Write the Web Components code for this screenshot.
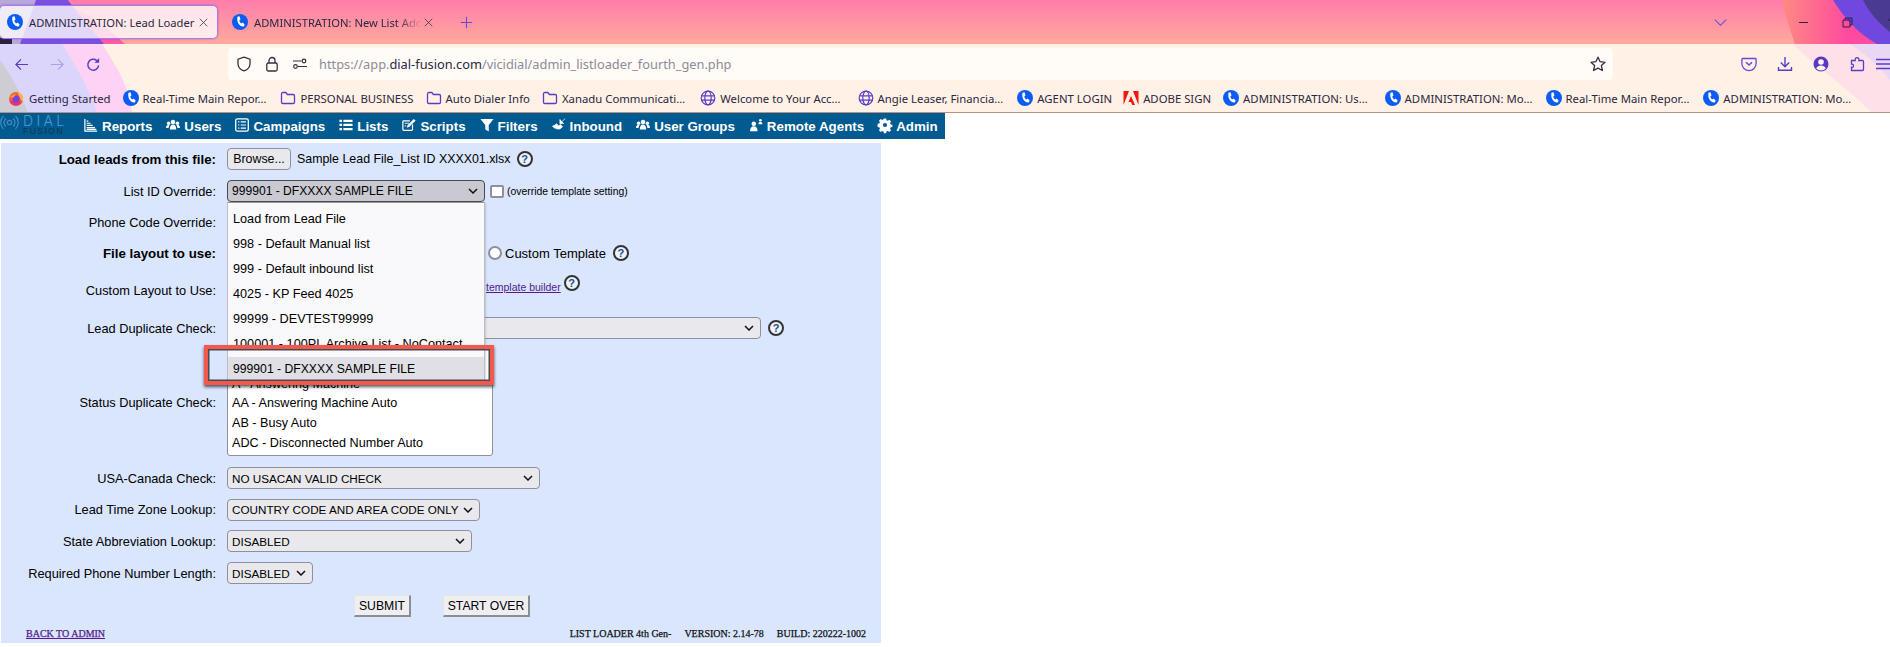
<!DOCTYPE html>
<html>
<head>
<meta charset="utf-8">
<title>ADMINISTRATION: Lead Loader</title>
<style>
  html, body { margin: 0; padding: 0; background: #fff; }
  body { width: 1890px; height: 647px; overflow: hidden; font-family: "Liberation Sans", Arial, sans-serif; }
</style>
</head>
<body>
<browser-chrome></browser-chrome>
<admin-nav>
  <nav-item icon="reports">Reports</nav-item>
  <nav-item icon="users">Users</nav-item>
  <nav-item icon="campaigns">Campaigns</nav-item>
  <nav-item icon="lists">Lists</nav-item>
  <nav-item icon="scripts">Scripts</nav-item>
  <nav-item icon="filters">Filters</nav-item>
  <nav-item icon="inbound">Inbound</nav-item>
  <nav-item icon="users">User Groups</nav-item>
  <nav-item icon="remote">Remote Agents</nav-item>
  <nav-item icon="admin">Admin</nav-item>
</admin-nav>
<loader-panel></loader-panel>

<script>
const ICONS = {
  phone: '<circle cx="8" cy="8" r="8" fill="#0a5cf2"/><path d="M5.4 2.8l2.1-.5 1 3.1-1.2 1c.3 1.3 1 2.4 2.1 3.1l1.3-.9 2 2.1-1 1.7C8 13 4.4 8.800 5.400 2.800z" fill="#fff"/>',
  firefox: '<circle cx="8" cy="9" r="7" fill="#f2603a"/><path d="M9 1c3 1.500 6 4 6 8 0 1-.3 2-.8 3L11 6z" fill="#ffb52e"/><path d="M1.500 11c1 3 3.500 4.500 6.500 4.500 3 0 5-1.500 6-4z" fill="#e8336d"/><circle cx="8" cy="9" r="3.700" fill="#7b3fe4"/><path d="M2 7c2-2 4-3 6-2.500L5 8z" fill="#ff9a2e"/>',
  folder: '<path d="M1.500 3.800a1.300 1.300 0 0 1 1.300-1.300h3l1.600 2h5.800a1.300 1.300 0 0 1 1.300 1.300v6.400a1.300 1.300 0 0 1-1.300 1.300H2.800a1.300 1.300 0 0 1-1.300-1.300z" fill="none" stroke="#5a3cc8" stroke-width="1.300"/>',
  globe: '<g fill="none" stroke="#5a3cc8" stroke-width="1.200"><circle cx="8" cy="8" r="6.800"/><ellipse cx="8" cy="8" rx="3.200" ry="6.800"/><path d="M1.500 5.800h13M1.500 10.200h13"/></g>',
  adobe: '<path d="M.5 1h5.500L.5 15zM15.500 1H10l5.500 14zM8 6l4 9H9.300L8 12H5.500z" fill="#f5150a"/>',
  back: '<path d="M15 8H2M7.500 2.500L2 8l5.500 5.500" fill="none" stroke="currentColor" stroke-width="1.300"/>',
  forward: '<path d="M1 8h13M8.500 2.500L14 8l-5.500 5.500" fill="none" stroke="currentColor" stroke-width="1.300"/>',
  reload: '<path d="M13.500 9a5.800 5.800 0 1 1-2-5.200" fill="none" stroke="currentColor" stroke-width="1.600"/><path d="M14 1v5h-5z" fill="currentColor"/>',
  shield: '<path d="M8 1.200l6 2v4.500c0 3.600-2.600 6-6 7.100-3.400-1.100-6-3.500-6-7.100V3.200z" fill="none" stroke="#34303f" stroke-width="1.300"/>',
  lock: '<g fill="none" stroke="#34303f" stroke-width="1.300"><rect x="2.800" y="7" width="10.400" height="8" rx="1.500"/><path d="M5 7V4.500a3 3 0 0 1 6 0V7"/></g>',
  perms: '<g fill="none" stroke="#34303f" stroke-width="1.200"><circle cx="3.500" cy="10.500" r="1.800"/><circle cx="12" cy="5" r="1.800"/><path d="M1 5h8.500M6 10.500h9"/></g>',
  star: '<path d="M8 1.200l2.100 4.500 4.900.6-3.600 3.300 1 4.900L8 12.100l-4.400 2.400 1-4.900L1 6.300l4.900-.6z" fill="none" stroke="#34303f" stroke-width="1.300" stroke-linejoin="round"/>',
  pocket: '<path d="M1.700 2.500h12.600a.8.800 0 0 1 .8.800v4.200a7.100 7.100 0 0 1-14.200 0V3.300a.8.800 0 0 1 .8-.8z" fill="none" stroke="#6a48dc" stroke-width="1.300"/><path d="M5 6.200l3 2.800 3-2.800" fill="none" stroke="#6a48dc" stroke-width="1.500"/>',
  download: '<path d="M8 1v9.500M3.800 6.500L8 10.700l4.200-4.200M1.500 11v3.300h13V11" fill="none" stroke="#5a3cc8" stroke-width="1.400"/>',
  profile: '<circle cx="8" cy="8" r="7.500" fill="#5a38c0"/><circle cx="8" cy="6" r="2.800" fill="#fff2ee"/><path d="M3.200 12.500c1-2.300 2.800-3 4.800-3s3.800.7 4.800 3a6.500 6.500 0 0 1-9.600 0z" fill="#fff2ee"/>',
  puzzle: '<path d="M1.500 5.500h3.700c-.9-3.800 4.600-3.800 3.700 0h3.600a1 1 0 0 1 1 1v8a1 1 0 0 1-1 1h-11v-3.300c2.700.7 2.700-3.700 0-3z" fill="none" stroke="#5a3cc8" stroke-width="1.300" transform="translate(1 -1) "/>',
  menu: '<path d="M1 3.500h14M1 8h14M1 12.500h14" stroke="#5a3cc8" stroke-width="1.400" fill="none"/>',
  chevron: '<path d="M1 4.500l7 7 7-7" fill="none" stroke="#6a48dc" stroke-width="1.300"/>',
  plus: '<path d="M8 1v14M1 8h14" stroke="#6a48dc" stroke-width="1.300" fill="none"/>',
  close: '<path d="M2.500 2.500l11 11M13.500 2.500l-11 11" stroke="#34303f" stroke-width="1.100" fill="none"/>',
  min: '<path d="M2.500 8h11" stroke="#1c1830" stroke-width="1.100" fill="none"/>',
  restore: '<path d="M2.500 5h8.500v8.500H2.500zM5 5V2.500h8.500V11H11" stroke="#1c1830" stroke-width="1.100" fill="none"/>',
  reports: '<path d="M1 1v14h14M3 3.500h2M3 6h4.500M3 8.500h7M3 11h9.500M3 13h11" fill="none" stroke="#fff" stroke-width="1.400"/>',
  users: '<g fill="#fff"><circle cx="8" cy="4.500" r="2.600"/><circle cx="3" cy="6" r="2"/><circle cx="13" cy="6" r="2"/><path d="M4.300 13c0-3.600 1.500-5.500 3.700-5.500s3.700 1.900 3.700 5.500z"/><path d="M0 11.500c0-2.300 1-3.800 2.700-3.800.6 0 1 .1 1.400.4-.7 1-1.100 2.100-1.200 3.400zM16 11.500c0-2.300-1-3.800-2.700-3.800-.6 0-1 .1-1.400.4.700 1 1.100 2.100 1.200 3.400z"/></g>',
  campaigns: '<g fill="none" stroke="#fff"><rect x=".800" y="1" width="14.400" height="14" rx="2" stroke-width="1.500"/><path d="M3.500 4.500h1.500M6.500 4.500h6M3.500 8h1.500M6.500 8h6M3.500 11.500h1.500M6.500 11.500h6" stroke-width="1.400"/></g>',
  lists: '<path d="M.5 2h3v2.500h-3zM.5 6.700h3v2.500h-3zM.5 11.400h3v2.500h-3zM5 2h10.500v2.500H5zM5 6.700h10.500v2.500H5zM5 11.400h10.500v2.500H5z" fill="#fff"/>',
  scripts: '<path d="M12 7.500v5.700a1 1 0 0 1-1 1H2a1 1 0 0 1-1-1V4.200a1 1 0 0 1 1-1h7" fill="none" stroke="#fff" stroke-width="1.400"/><path d="M13.500 1l2 2-7 7-3 1 1-3z" fill="#fff"/><path d="M3 6h5M3 9h2" stroke="#fff" fill="none"/>',
  filters: '<path d="M.5 1h15L10 8v7.500L6 13V8z" fill="#fff"/>',
  inbound: '<path d="M3.500 8l1.800-1.500c.8 1 1.500 1.700 2.500 2.400l1.600-1.600 2.600 2.300c-1.500 3-4.600 3.700-7.500 2.500-1.500-.6-3-1.500-4-2.600zM9 1.500v4.800h4.500M9.500 5.800L15 .8" fill="#fff" stroke="#fff" stroke-width=".8"/>',
  remote: '<g fill="#fff"><circle cx="5.500" cy="6.500" r="2.600"/><path d="M1.200 15c0-4 1.800-5.700 4.300-5.700S9.800 11 9.800 15z"/><circle cx="13" cy="2.500" r="1.500"/><path d="M10.700 7c0-1.800 1-2.800 2.300-2.800s2.300 1 2.300 2.800z"/></g>',
  admin: '<path fill-rule="evenodd" d="M6.700.5h2.600l.4 2 1.500.7 1.800-1.100 1.900 1.900-1.100 1.800.7 1.500 2 .4v2.600l-2 .4-.7 1.500 1.100 1.800-1.900 1.900-1.800-1.100-1.500.7-.4 2H6.700l-.4-2-1.500-.7-1.800 1.100-1.900-1.900 1.100-1.800-.7-1.500-2-.4V6.700l2-.4.7-1.500L1.100 3l1.900-1.900 1.800 1.100 1.500-.7zM8 5.600a2.400 2.400 0 1 0 0 4.800 2.400 2.400 0 0 0 0-4.800z" fill="#fff"/>'
};

class UiIcon extends HTMLElement {
  constructor() {
    super();
    this.attachShadow({ mode: 'open' });
  }
  connectedCallback() {
    const size = this.getAttribute('size') || 16;
    this.shadowRoot.innerHTML = `
      <style>:host { display: inline-flex; flex: none; width: ${size}px; height: ${size}px; } svg { display: block; width: 100%; height: 100%; overflow: visible; }</style>
      <svg viewBox="0 0 16 16">${ICONS[this.getAttribute('name')] || ''}</svg>`;
  }
}
customElements.define('ui-icon', UiIcon);

class BrowserTab extends HTMLElement {
  constructor() {
    super();
    this.attachShadow({ mode: 'open' });
  }
  connectedCallback() {
    this.shadowRoot.innerHTML = `
      <style>
        :host { display: flex; align-items: center; height: 34px; box-sizing: border-box; flex: none; width: 219px; padding-left: 7px; border: 1px solid transparent; border-radius: 5px; }
        :host([active]) { background: rgba(255,255,255,.78); border-color: #a678f2; box-shadow: 0 0 2px rgba(90,50,200,.5); }
        .t { margin-left: 6px; width: 168px; overflow: hidden; white-space: nowrap; font-size: 11.2px; color: #2b2740; }
        :host(:not([active])) .t { -webkit-mask-image: linear-gradient(90deg, #000 85%, transparent 100%); mask-image: linear-gradient(90deg, #000 85%, transparent 100%); }
        .x { margin-left: 1px; }
      </style>
      <ui-icon name="phone"></ui-icon><div class="t"><slot></slot></div><ui-icon class="x" name="close" size="11"></ui-icon>`;
  }
}
customElements.define('browser-tab', BrowserTab);

class BookmarkItem extends HTMLElement {
  constructor() {
    super();
    this.attachShadow({ mode: 'open' });
  }
  connectedCallback() {
    this.shadowRoot.innerHTML = `
      <style>
        :host { display: inline-flex; align-items: center; gap: var(--gap, 4px); flex: none; font-size: 11.35px; color: #2b2740; white-space: nowrap; }
      </style>
      <ui-icon name="${this.getAttribute('icon')}"></ui-icon><span><slot></slot></span>`;
  }
}
customElements.define('bookmark-item', BookmarkItem);

class BrowserChrome extends HTMLElement {
  constructor() {
    super();
    this.attachShadow({ mode: 'open' });
  }
  connectedCallback() {
    const marks = [
      ['firefox', 'Getting Started', 0], ['phone', 'Real-Time Main Repor…', 12], ['folder', 'PERSONAL BUSINESS', 14],
      ['folder', 'Auto Dialer Info', 12], ['folder', 'Xanadu Communicati…', 12], ['globe', 'Welcome to Your Acc…', 15],
      ['globe', 'Angie Leaser, Financia…', 17], ['phone', 'AGENT LOGIN', 14], ['adobe', 'ADOBE SIGN', 11],
      ['phone', 'ADMINISTRATION: Us…', 12], ['phone', 'ADMINISTRATION: Mo…', 17], ['phone', 'Real-Time Main Repor…', 13], ['phone', 'ADMINISTRATION: Mo…', 14]
    ];
    this.shadowRoot.innerHTML = `
      <style>
        :host { display: block; position: relative; height: 113px; box-sizing: border-box; border-bottom: 1px solid #b8927c; overflow: hidden; font-family: "Noto Sans", "Open Sans", sans-serif; }
        .art { position: absolute; left: 0; top: 0; width: 1890px; height: 113px; }
        .tabs, .tools, .marks { position: relative; display: flex; align-items: center; }
        .tabs { height: 44px; box-sizing: border-box; }
        .tabs browser-tab:first-child { margin-left: -1px; }
        .tabs browser-tab + browser-tab { margin-left: 6px; }
        .plus { margin-left: 17px; }
        .winbtns { margin-left: auto; display: flex; align-items: center; }
        .tools { height: 40px; }
        .btn { width: 36px; height: 36px; flex: none; display: flex; align-items: center; justify-content: center; color: #5a3cc8; }
        .btn.off { color: #b39cf0; }
        .url { margin-left: 117px; width: 1385px; height: 32px; flex: none; box-sizing: border-box; background: #fffbf7; border-radius: 4px; display: flex; align-items: center; padding-left: 8px; font-size: 12.8px; color: #8e8a97; white-space: nowrap; }
        .url b { font-weight: 400; color: #2b2740; }
        .url ui-icon { margin-right: 12px; }
        .url span { margin-left: 1px; }
        .url .star { margin: 0 7px 0 auto; }
        .right { margin-left: 118px; display: flex; }
        .marks { height: 28px; padding-left: 8px; }
      </style>
      <svg class="art" viewBox="0 0 1890 113" preserveAspectRatio="none">
        <defs>
          <linearGradient id="sky" x1="0" y1="0" x2="0" y2="1"><stop offset="0" stop-color="#ff7daa"/><stop offset="1" stop-color="#ffaa9c"/></linearGradient>
          <linearGradient id="hot" x1="0" y1="0" x2="1" y2="0"><stop offset="0" stop-color="#ff8a82"/><stop offset=".6" stop-color="#ff4b9f"/></linearGradient>
        </defs>
        <rect width="1890" height="44" fill="url(#sky)"/>
        <path d="M60 0C90 15 110 30 125 44H0V0z" fill="#ff5aa6"/>
        <path d="M36 0H68C78 15 92 30 104 44H0V0z" fill="#7a50e0"/>
        <path d="M0 0H36L20 44H0z" fill="#b9a7d8"/>
        <path d="M0 38H12V44H0z" fill="#2c2040"/>
        <path d="M1782 0C1785 15 1790 30 1795 44H1890V0z" fill="url(#hot)"/>
        <path d="M1833 0C1842 15 1858 34 1877 44H1890V0z" fill="#7048e0"/>
        <path d="M1863 0C1870 14 1880 24 1890 32V0z" fill="#4a3a90"/>
        <rect y="44" width="1890" height="69" fill="#fff1e6"/>
        <path d="M0 44H102C112 60 130 85 132 113H0z" fill="#fdd2f4"/>
        <path d="M0 44H62C72 60 88 85 97 113H0z" fill="#dcd5fb"/>
        <path d="M0 60C8 70 22 95 28 113H0z" fill="#cfcdd4"/>
        <path d="M1793 44C1815 66 1850 90 1872 113H1890V44z" fill="#fde0e8"/>
        <path d="M1850 44H1890V80C1880 66 1865 54 1850 44z" fill="#e8d8f4"/>
      </svg>
      <div class="tabs">
        <browser-tab active>ADMINISTRATION: Lead Loader</browser-tab>
        <browser-tab>ADMINISTRATION: New List Add</browser-tab>
        <ui-icon class="plus" name="plus" size="13"></ui-icon>
        <div class="winbtns">
          <ui-icon name="chevron" size="13"></ui-icon>
          <ui-icon name="min" size="13" style="margin-left:70px"></ui-icon>
          <ui-icon name="restore" size="13" style="margin-left:31px"></ui-icon>
          <ui-icon name="min" size="12" style="margin-left:31px;margin-right:-7px;transform:rotate(45deg)"></ui-icon>
        </div>
      </div>
      <div class="tools">
        <div class="btn" style="margin-left:3px"><ui-icon name="back" size="15"></ui-icon></div>
        <div class="btn off"><ui-icon name="forward" size="15"></ui-icon></div>
        <div class="btn"><ui-icon name="reload" size="15"></ui-icon></div>
        <div class="url">
          <ui-icon name="shield"></ui-icon><ui-icon name="lock"></ui-icon><ui-icon name="perms" style="margin-right:10px"></ui-icon>
          <span>https://app.<b>dial-fusion.com</b>/vicidial/admin_listloader_fourth_gen.php</span>
          <ui-icon class="star" name="star"></ui-icon>
        </div>
        <div class="right">
          <div class="btn"><ui-icon name="pocket"></ui-icon></div>
          <div class="btn"><ui-icon name="download"></ui-icon></div>
          <div class="btn"><ui-icon name="profile"></ui-icon></div>
          <div class="btn"><ui-icon name="puzzle"></ui-icon></div>
          <div class="btn" style="margin-left:-10px"><ui-icon name="menu"></ui-icon></div>
        </div>
      </div>
      <div class="marks">
        ${marks.map((m, i) => `<bookmark-item icon="${m[0]}" style="margin-left:${m[2]}px${i ? '' : ';--gap:5px'}">${m[1]}</bookmark-item>`).join('')}
      </div>`;
  }
}
customElements.define('browser-chrome', BrowserChrome);

class AdminNav extends HTMLElement {
  constructor() {
    super();
    this.attachShadow({ mode: 'open' });
  }
  connectedCallback() {
    this.shadowRoot.innerHTML = `
      <style>
        :host { display: flex; align-items: center; gap: 14px; width: 945px; height: 26px; background: #015b91; overflow: hidden; box-sizing: border-box; }
        .logo { width: 70px; height: 26px; flex: none; display: flex; }
        .rings { width: 20px; height: 26px; flex: none; }
        .words { margin: 1px 0 0 3px; display: flex; flex-direction: column; width: 45px; }
        .dial { font: 300 14px/13px "Inter", "Liberation Sans", sans-serif; letter-spacing: 3.4px; color: #4d9ad0; }
        .fusion { font: 400 8.5px/9px "Liberation Sans", sans-serif; letter-spacing: 1.5px; color: #0e3350; }
      </style>
      <div class="logo">
        <svg class="rings" viewBox="0 0 20 26"><g fill="none" stroke="#3f8dc4" stroke-width="1.200"><circle cx="9.500" cy="9.500" r="2.200" fill="#1f4f78"/><path d="M6 5.500a5 5 0 0 0 0 8M13 5.500a5 5 0 0 1 0 8M3.500 3a9 9 0 0 0 0 13M15.500 3a9 9 0 0 1 0 13"/></g></svg>
        <div class="words"><span class="dial">DIAL</span><span class="fusion">FUSION</span></div>
      </div>
      <slot></slot>`;
  }
}
customElements.define('admin-nav', AdminNav);

class NavItem extends HTMLElement {
  constructor() {
    super();
    this.attachShadow({ mode: 'open' });
  }
  connectedCallback() {
    this.shadowRoot.innerHTML = `
      <style>
        :host { display: inline-flex; align-items: center; gap: 4px; flex: none; color: #fff; font-size: 13.33px; font-weight: 700; white-space: nowrap; }
        ui-icon { margin-top: -3px; }
      </style>
      <ui-icon name="${this.getAttribute('icon')}" size="14"></ui-icon><span><slot></slot></span>`;
  }
}
customElements.define('nav-item', NavItem);

class FormRow extends HTMLElement {
  constructor() {
    super();
    this.attachShadow({ mode: 'open' });
  }
  connectedCallback() {
    this.shadowRoot.innerHTML = `
      <style>
        :host { display: flex; align-items: center; height: var(--h, 32px); color: #000; font-size: 12px; }
        .label { width: 215px; flex: none; text-align: right; white-space: nowrap; font-size: 12.8px; }
        :host([strong]) .label { font-weight: 700; font-size: 13.3px; }
        .ctl { margin-left: 11px; display: flex; align-items: center; min-width: 0; }
      </style>
      <div class="label">${this.getAttribute('label')}</div><div class="ctl"><slot></slot></div>`;
  }
}
customElements.define('form-row', FormRow);

class FakeSelect extends HTMLElement {
  constructor() {
    super();
    this.attachShadow({ mode: 'open' });
  }
  connectedCallback() {
    this.shadowRoot.innerHTML = `
      <style>
        :host { display: flex; align-items: center; justify-content: space-between; box-sizing: border-box; width: ${this.getAttribute('w')}px; height: 22px; padding: 0 6px 0 4px; border: 1px solid #8f8f9d; border-radius: 4px; background: #e9e9ed; font-size: 11.7px; color: #000; white-space: nowrap; flex: none; }
        :host([open]) { background: #c9c9d1; border-color: #484850; font-size: 12.1px; }
        svg { width: 10px; height: 6px; flex: none; }
      </style>
      <span><slot></slot></span>
      <svg viewBox="0 0 10 6"><path d="M1 1l4 4 4-4" fill="none" stroke="#111" stroke-width="1.500"/></svg>`;
  }
}
customElements.define('fake-select', FakeSelect);

class HelpIcon extends HTMLElement {
  constructor() {
    super();
    this.attachShadow({ mode: 'open' });
  }
  connectedCallback() {
    this.shadowRoot.innerHTML = `
      <style>
        :host { display: inline-flex; flex: none; align-items: center; justify-content: center; box-sizing: border-box; width: 16px; height: 16px; border: 2px solid #333; border-radius: 50%; background: #eef2fb; color: #1f4c86; font: 700 11px/1 "Liberation Sans", sans-serif; }
      </style>?`;
  }
}
customElements.define('help-icon', HelpIcon);

class LoaderPanel extends HTMLElement {
  constructor() {
    super();
    this.attachShadow({ mode: 'open' });
  }
  connectedCallback() {
    const list = ['Load from Lead File', '998 - Default Manual list', '999 - Default inbound list', '4025 - KP Feed 4025', '99999 - DEVTEST99999', '100001 - 100PL Archive List - NoContact'];
    this.shadowRoot.innerHTML = `
      <style>
        :host { display: block; position: relative; width: 880px; height: 500px; margin: 4px 0 0 1px; background: #d9e6fe; font-size: 12px; }
        .browse { box-sizing: border-box; width: 64px; height: 22px; border: 1px solid #8f8f9d; border-radius: 4px; background: #e9e9ed; display: flex; align-items: center; justify-content: center; flex: none; font-size: 12.4px; }
        .fname { margin-left: 6px; white-space: nowrap; font-size: 12.4px; }
        .box { box-sizing: border-box; width: 14px; height: 13px; border: 2px solid #8f8f9d; border-radius: 2px; background: #fff; flex: none; }
        .radio { box-sizing: border-box; width: 14px; height: 14px; border: 2px solid #8f8f9d; border-radius: 50%; background: #fff; flex: none; }
        .small { font-size: 10.4px; margin-left: 3px; white-space: nowrap; }
        a { color: #551a8b; text-decoration: underline; }
        .listbox { box-sizing: border-box; width: 266px; height: 107px; background: #fff; border: 1px solid #8f8f9d; border-radius: 3px; display: flex; flex-direction: column; justify-content: flex-end; padding: 0 0 1px 4px; font-size: 12.6px; }
        .listbox div { height: 19.700px; line-height: 19.700px; white-space: nowrap; }
        .actions { display: flex; padding-left: 353px; gap: 32px; height: 34px; align-items: center; }
        .bevel { box-sizing: border-box; height: 22px; display: flex; align-items: center; justify-content: center; background: #efeff2; border: 1px solid #e4e4ea; border-right: 2px solid #8d8d95; border-bottom: 2px solid #8d8d95; font-size: 12.2px; }
        .foot { display: flex; height: 20px; align-items: center; padding: 0 15px 0 25px; font: 400 10px "Liberation Serif", serif; color: #111; -webkit-text-stroke: .25px currentColor; }
        .foot .bk { margin-left: auto; }
        /* open dropdown of List ID Override */
        .popup { position: absolute; left: 226px; top: 59px; width: 258px; height: 179px; box-sizing: border-box; background: #f9f9fb; border: 1px solid #bdbdc6; border-top-color: #999; border-radius: 0 0 3px 3px; padding: 3.500px 0 0 5px; box-shadow: 1px 1px 2px rgba(0,0,0,.15); font-size: 12.7px; }
        .popup div { height: 25px; line-height: 25px; white-space: nowrap; overflow: hidden; }
        .popup .sel { background: #dfdfe5; margin-left: -5px; padding-left: 5px; font-size: 12.2px; }
        /* red annotation frame pasted over the picture */
        .frame { position: absolute; left: 203px; top: 202px; width: 290px; height: 40px; box-sizing: border-box; border: 4px solid #f4574d; box-shadow: 0 2px 3px rgba(0,0,0,.65), inset 0 0 0 1.500px #444c50; }
      </style>
      <form-row label="Load leads from this file:" strong style="--h:32px">
        <div class="browse">Browse...</div><span class="fname">Sample Lead File_List ID XXXX01.xlsx</span><help-icon style="margin-left:6px"></help-icon>
      </form-row>
      <form-row label="List ID Override:" style="--h:32px">
        <fake-select w="258" open>999901 - DFXXXX SAMPLE FILE</fake-select><div class="box" style="margin-left:5px"></div><span class="small">(override template setting)</span>
      </form-row>
      <form-row label="Phone Code Override:" style="--h:30px"></form-row>
      <form-row label="File layout to use:" strong style="--h:32px">
        <div class="radio" style="margin-left:261px"></div><span style="margin-left:3px;white-space:nowrap;font-size:13px">Custom Template</span><help-icon style="margin-left:7px"></help-icon>
      </form-row>
      <form-row label="Custom Layout to Use:" style="--h:42px">
        <a href="#" style="margin-left:259px;font-size:10.5px;white-space:nowrap;margin-top:-6px">template builder</a><help-icon style="margin:-14px 0 0 3px"></help-icon>
      </form-row>
      <form-row label="Lead Duplicate Check:" style="--h:34px;margin-bottom:4px">
        <fake-select w="534"></fake-select><help-icon style="margin-left:7px"></help-icon>
      </form-row>
      <form-row label="Status Duplicate Check:" style="--h:106px;margin-bottom:7px">
        <div class="listbox">
          <div>A - Answering Machine</div><div>AA - Answering Machine Auto</div><div>AB - Busy Auto</div><div>ADC - Disconnected Number Auto</div>
        </div>
      </form-row>
      <form-row label="USA-Canada Check:" style="--h:32px"><fake-select w="313">NO USACAN VALID CHECK</fake-select></form-row>
      <form-row label="Lead Time Zone Lookup:" style="--h:31px"><fake-select w="253">COUNTRY CODE AND AREA CODE ONLY</fake-select></form-row>
      <form-row label="State Abbreviation Lookup:" style="--h:32px"><fake-select w="245">DISABLED</fake-select></form-row>
      <form-row label="Required Phone Number Length:" style="--h:32px"><fake-select w="86">DISABLED</fake-select></form-row>
      <div class="actions">
        <div class="bevel" style="width:57px">SUBMIT</div><div class="bevel" style="width:87px">START OVER</div>
      </div>
      <div class="foot">
        <a href="#">BACK TO ADMIN</a>
        <span class="bk">LIST LOADER 4th Gen-</span><span style="margin-left:13px">VERSION: 2.14-78</span><span style="margin-left:13px">BUILD: 220222-1002</span>
      </div>
      <div class="popup">
        ${list.map(t => `<div>${t}</div>`).join('')}
        <div class="sel">999901 - DFXXXX SAMPLE FILE</div>
      </div>
      <div class="frame"></div>`;
  }
}
customElements.define('loader-panel', LoaderPanel);
</script>
</body>
</html>
